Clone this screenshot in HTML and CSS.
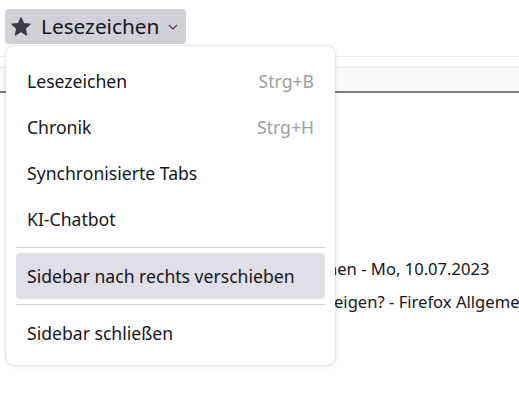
FILE: index.html
```html
<!DOCTYPE html>
<html lang="de">
<head>
<meta charset="utf-8">
<link rel="stylesheet" href="styles.css">
</head>
<body>
<div class="page">
  <div class="toolbar">
    <button class="switcher">
      <svg class="star" width="20" height="19" viewBox="0 0 20 19"><path d="M10 0.8 L12.6 6.6 L19 7.2 L14.2 11.5 L15.6 17.9 L10 14.6 L4.4 17.9 L5.8 11.5 L1 7.2 L7.4 6.6 Z" fill="#3a3a40" stroke="#3a3a40" stroke-width="1.2" stroke-linejoin="round"/></svg>
      <span class="switcher-label">Lesezeichen</span>
      <svg class="chevron" width="10" height="6" viewBox="0 0 10 6"><path d="M1 1 L5 5 L9 1" fill="none" stroke="#3a3a40" stroke-width="1.2"/></svg>
    </button>
  </div>
  <div class="content">
    <div class="search-row"></div>
    <div class="header-row"></div>
    <ul class="results">
      <li class="result r1"><span>nen - Mo, 10.07.2023</span></li>
      <li class="result r2"><span>eigen? - Firefox Allgemein</span></li>
    </ul>
  </div>
  <div class="menu">
    <div class="item"><span>Lesezeichen</span><span class="shortcut">Strg+B</span></div>
    <div class="item"><span>Chronik</span><span class="shortcut">Strg+H</span></div>
    <div class="item"><span>Synchronisierte Tabs</span></div>
    <div class="item"><span>KI-Chatbot</span></div>
    <div class="sep"></div>
    <div class="item active"><span>Sidebar nach rechts verschieben</span></div>
    <div class="sep"></div>
    <div class="item"><span>Sidebar schließen</span></div>
  </div>
</div>
</body>
</html>
```
FILE: styles.css
```css
* { box-sizing: border-box; }
html, body { margin: 0; padding: 0; background: #fff; }
body {
  font-family: "Noto Sans", "Open Sans", sans-serif;
  color: #15141a;
  width: 519px;
  height: 415px;
  overflow: hidden;
}
.page { position: relative; height: 415px; }
.toolbar { padding: 9px 0 0 5px; height: 47px; }
.switcher {
  display: flex;
  align-items: center;
  width: 181px;
  height: 35px;
  padding: 0 0 0 6px;
  border: none;
  border-radius: 4px;
  background: #d0d0d7;
  font: inherit;
  color: #15141a;
}
.star { flex: none; }
.switcher-label { font-size: 20.8px; margin-left: 10px; line-height: 1; }
.chevron { margin-left: 9px; flex: none; }

.search-row { height: 20px; border-bottom: 1px solid #ececf0; margin-top: -10px; }
.header-row { height: 26px; margin-top: 10px; background: #fafafa; border-top: 1px solid #e6e6e9; border-bottom: 2px solid #7b7b7f; }
.results { list-style: none; margin: 159px 0 0 335px; padding: 0; overflow: hidden; }
.result { font-size: 16.6px; line-height: 33px; white-space: nowrap; }
.r1 span { margin-left: -8px; }
.r2 span { margin-left: -1px; }

.menu {
  position: absolute;
  left: 6px;
  top: 46px;
  width: 329px;
  padding: 12px 10px 9px;
  background: #fff;
  border-radius: 8px;
  box-shadow: 0 0 2px rgba(0,0,0,0.18), 0 1px 5px rgba(0,0,0,0.12);
}
.item {
  display: flex;
  justify-content: space-between;
  align-items: center;
  height: 46px;
  padding: 0 11px;
  border-radius: 4px;
  font-size: 17.6px;
}
.item.active { background: #e0dfe5; }
.shortcut { color: #9d9da3; }
.sep { height: 1px; background: #cfcfd4; margin: 5px 0; }
```
